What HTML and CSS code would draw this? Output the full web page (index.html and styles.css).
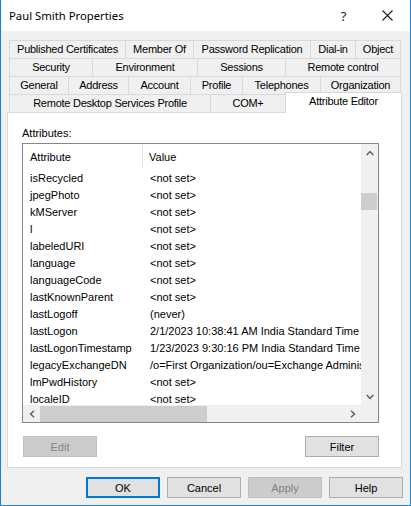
FILE: index.html
```html
<!DOCTYPE html>
<html>
<head>
<meta charset="utf-8">
<link rel="stylesheet" href="styles.css">
</head>
<body>
<div class="window">
  <div class="titlebar">
    <span class="title">Paul Smith Properties</span>
    <span class="cap-btn help">?</span>
    <span class="cap-btn close"><svg width="11" height="11" viewBox="0 0 11 11"><path d="M0.5 0.5 L10.5 10.5 M10.5 0.5 L0.5 10.5" stroke="#1a1a1a" stroke-width="1.1" fill="none"/></svg></span>
  </div>
  <div class="content">
    <div class="tabs">
      <div class="tabrow">
        <div class="tab w116">Published Certificates</div>
        <div class="tab w68">Member Of</div>
        <div class="tab w117">Password Replication</div>
        <div class="tab w45">Dial-in</div>
        <div class="tab w46 last">Object</div>
      </div>
      <div class="tabrow">
        <div class="tab w83">Security</div>
        <div class="tab w105">Environment</div>
        <div class="tab w88">Sessions</div>
        <div class="tab w116 last">Remote control</div>
      </div>
      <div class="tabrow">
        <div class="tab w59">General</div>
        <div class="tab w60">Address</div>
        <div class="tab w62">Account</div>
        <div class="tab w52">Profile</div>
        <div class="tab w78">Telephones</div>
        <div class="tab w81 last">Organization</div>
      </div>
      <div class="tabrow">
        <div class="tab w201">Remote Desktop Services Profile</div>
        <div class="tab w75">COM+</div>
        <div class="tab selected last">Attribute Editor</div>
      </div>
    </div>
    <div class="panel">
      <div class="label">Attributes:</div>
      <div class="list">
        <div class="list-main">
          <div class="list-view">
            <div class="header">
              <div class="c1 hc">Attribute</div>
              <div class="c2 hc">Value</div>
            </div>
            <div class="row"><div class="c1">isRecycled</div><div class="c2">&lt;not set&gt;</div></div>
            <div class="row"><div class="c1">jpegPhoto</div><div class="c2">&lt;not set&gt;</div></div>
            <div class="row"><div class="c1">kMServer</div><div class="c2">&lt;not set&gt;</div></div>
            <div class="row"><div class="c1">l</div><div class="c2">&lt;not set&gt;</div></div>
            <div class="row"><div class="c1">labeledURI</div><div class="c2">&lt;not set&gt;</div></div>
            <div class="row"><div class="c1">language</div><div class="c2">&lt;not set&gt;</div></div>
            <div class="row"><div class="c1">languageCode</div><div class="c2">&lt;not set&gt;</div></div>
            <div class="row"><div class="c1">lastKnownParent</div><div class="c2">&lt;not set&gt;</div></div>
            <div class="row"><div class="c1">lastLogoff</div><div class="c2">(never)</div></div>
            <div class="row"><div class="c1">lastLogon</div><div class="c2">2/1/2023 10:38:41 AM India Standard Time</div></div>
            <div class="row"><div class="c1">lastLogonTimestamp</div><div class="c2">1/23/2023 9:30:16 PM India Standard Time</div></div>
            <div class="row"><div class="c1">legacyExchangeDN</div><div class="c2">/o=First Organization/ou=Exchange Administrative Group (FYDIBOHF23SPDLT)/cn=Recipients</div></div>
            <div class="row"><div class="c1">lmPwdHistory</div><div class="c2">&lt;not set&gt;</div></div>
            <div class="row"><div class="c1">localeID</div><div class="c2">&lt;not set&gt;</div></div>
          </div>
          <div class="vscroll">
            <div class="arrow"><svg width="8" height="6" viewBox="0 0 8 6"><path d="M0.7 5 L4 1.5 L7.3 5" stroke="#606060" stroke-width="1.5" fill="none"/></svg></div>
            <div class="vtrack"><div class="vthumb"></div></div>
            <div class="arrow"><svg width="8" height="6" viewBox="0 0 8 6"><path d="M0.7 1 L4 4.5 L7.3 1" stroke="#606060" stroke-width="1.5" fill="none"/></svg></div>
          </div>
        </div>
        <div class="hbar">
          <div class="hscroll">
            <div class="arrow"><svg width="6" height="8" viewBox="0 0 6 8"><path d="M5 0.7 L1.5 4 L5 7.3" stroke="#606060" stroke-width="1.5" fill="none"/></svg></div>
            <div class="htrack"><div class="hthumb"></div></div>
            <div class="arrow"><svg width="6" height="8" viewBox="0 0 6 8"><path d="M1 0.7 L4.5 4 L1 7.3" stroke="#606060" stroke-width="1.5" fill="none"/></svg></div>
          </div>
          <div class="corner"></div>
        </div>
      </div>
      <div class="panel-buttons">
        <div class="btn disabled edit">Edit</div>
        <div class="btn">Filter</div>
      </div>
    </div>
    <div class="dialog-buttons">
      <div class="btn default">OK</div>
      <div class="btn">Cancel</div>
      <div class="btn disabled">Apply</div>
      <div class="btn">Help</div>
    </div>
  </div>
</div>
</body>
</html>
```

FILE: styles.css
```css
html, body {
  margin: 0;
  padding: 0;
  background: #ffffff;
}
* { box-sizing: border-box; }

.window {
  width: 411px;
  height: 506px;
  border-left: 1px solid #1883d7;
  border-right: 1px solid #1883d7;
  border-bottom: 1px solid #1883d7;
  background: #f0f0f0;
  font-family: "Liberation Sans", Arial, sans-serif;
  font-size: 11px;
  color: #000;
  display: flex;
  flex-direction: column;
}

.titlebar {
  height: 31px;
  background: #ffffff;
  display: flex;
  align-items: center;
}
.title {
  flex: 1;
  padding-left: 8px;
  font-family: "Noto Sans", "Open Sans", sans-serif;
  font-size: 11.3px;
  color: #000;
}
.cap-btn {
  width: 46px;
  height: 31px;
  display: flex;
  align-items: center;
  justify-content: center;
}
.help {
  font-family: "Noto Sans", sans-serif;
  font-size: 13px;
  color: #1a1a1a;
  padding-left: 5px;
}

.content {
  flex: 1;
  padding: 9px 7px 0 6px;
  display: flex;
  flex-direction: column;
}

.tabs {
  margin-left: 2px;
  width: 392px;
}
.tabrow {
  display: flex;
  align-items: flex-start;
  height: 18px;
}
.tab {
  height: 18px;
  border-top: 1px solid #d9d9d9;
  border-left: 1px solid #d9d9d9;
  background: #f0f0f0;
  display: flex;
  align-items: center;
  justify-content: center;
  white-space: nowrap;
  flex: none;
  padding-bottom: 1px;
  letter-spacing: -0.25px;
}
.tab.last { border-right: 1px solid #d9d9d9; }
.tab.selected {
  width: 117px;
  height: 21px;
  margin-top: -2px;
  margin-right: -1px;
  background: #ffffff;
  position: relative;
  z-index: 1;
  padding-bottom: 4px;
}

.w45 { width: 45px; } .w46 { width: 46px; } .w52 { width: 52px; }
.w59 { width: 59px; } .w60 { width: 60px; } .w62 { width: 62px; }
.w68 { width: 68px; } .w75 { width: 75px; } .w78 { width: 78px; }
.w81 { width: 81px; } .w83 { width: 83px; } .w88 { width: 88px; }
.w105 { width: 105px; } .w116 { width: 116px; } .w117 { width: 117px; }
.w201 { width: 201px; }

.panel {
  width: 395px;
  height: 356px;
  background: #ffffff;
  border: 1px solid #d9d9d9;
  padding: 14px 0 0 14px;
}
.label {
  height: 13px;
  line-height: 13px;
  margin-bottom: 3px;
}

.list {
  width: 357px;
  height: 280px;
  border: 1px solid #828790;
  display: flex;
  flex-direction: column;
  background: #fff;
}
.list-main {
  display: flex;
  height: 261px;
}
.list-view {
  width: 338px;
  overflow: hidden;
}
.header {
  display: flex;
  height: 26px;
}
.hc {
  height: 24px;
  line-height: 26px;
}
.header .c1 { border-right: 1px solid #e5e5e5; }
.row {
  display: flex;
  height: 17px;
  line-height: 17px;
  white-space: nowrap;
}
.c1 {
  width: 120px;
  flex: none;
  padding-left: 7px;
  overflow: hidden;
}
.c2 {
  flex: none;
  padding-left: 6px;
  white-space: nowrap;
}
.row .c2 { padding-left: 7px; }

.vscroll {
  width: 17px;
  background: #f0f0f0;
  display: flex;
  flex-direction: column;
}
.arrow {
  width: 17px;
  height: 17px;
  display: flex;
  align-items: center;
  justify-content: center;
  flex: none;
}
.vtrack {
  flex: 1;
  padding-top: 32px;
}
.vthumb {
  width: 16px;
  height: 17px;
  background: #cdcdcd;
}

.hbar {
  display: flex;
  height: 17px;
}
.hscroll {
  width: 338px;
  display: flex;
  background: #f0f0f0;
}
.htrack {
  flex: 1;
  padding-top: 1px;
}
.hthumb {
  width: 167px;
  height: 16px;
  background: #cdcdcd;
}
.corner {
  width: 17px;
  background: #f0f0f0;
}

.btn {
  width: 74px;
  height: 21px;
  border: 1px solid #adadad;
  background: #e1e1e1;
  display: flex;
  align-items: center;
  justify-content: center;
  flex: none;
}
.btn.disabled {
  background: #cccccc;
  border-color: #bfbfbf;
  color: #838383;
}
.btn.default {
  border: 2px solid #0078d7;
}

.panel-buttons {
  width: 357px;
  margin-top: 13px;
  display: flex;
  justify-content: space-between;
}
.edit { margin-left: 1px; }

.dialog-buttons {
  margin-top: 9px;
  display: flex;
  justify-content: flex-end;
  gap: 7px;
}
.dialog-buttons .btn { width: 74px; }
```
